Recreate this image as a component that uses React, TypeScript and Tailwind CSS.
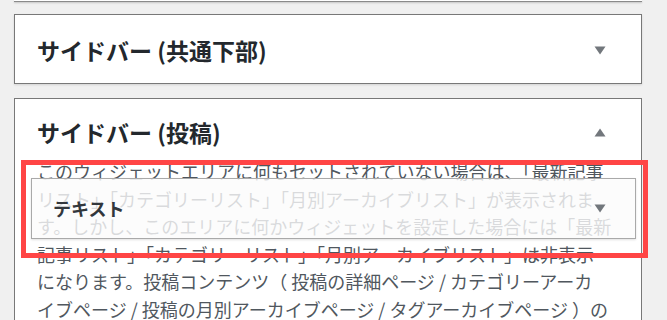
import React from 'react';

function Caret({ up = false }: { up?: boolean }) {
  return (
    <svg width="12" height="9" viewBox="0 0 12 9" className="shrink-0">
      <polygon points={up ? '0.5,8.5 11.5,8.5 6,0.5' : '0.5,0.5 11.5,0.5 6,8.5'} fill="#72777c" />
    </svg>
  );
}

const lines = [
  'このウィジェットエリアに何もセットされていない場合は、「最新記事',
  'リスト」「カテゴリーリスト」「月別アーカイブリスト」が表示されま',
  'す。しかし、このエリアに何かウィジェットを設定した場合には「最新',
  '記事リスト」「カテゴリーリスト」「月別アーカイブリスト」は非表示',
  'になります。投稿コンテンツ（ 投稿の詳細ページ / カテゴリーアーカ',
  'イブページ / 投稿の月別アーカイブページ / タグアーカイブページ ）の',
];

export default function App() {
  return (
    <div className="relative w-[667px] h-[320px] overflow-hidden bg-[#f0f0f0] font-['Noto_Sans_CJK_JP','Noto_Sans',sans-serif]">
      <div className="flex flex-col pl-[14px] w-[642px]">
        {/* previous section, scrolled mostly out of view */}
        <div className="h-[2px] bg-white border-b border-[#8a8a8a] shadow-[0_1px_2px_rgba(0,0,0,0.18)]" />

        <div className="mt-[12px] h-[70px] bg-white border border-[#787878] shadow-[0_1px_2px_rgba(0,0,0,0.12)] flex items-center justify-between pl-[22px] pr-[35px] pt-[2px]">
          <h3 className="text-[23px] leading-[28px] font-bold text-[#23282d] whitespace-nowrap">サイドバー (共通下部)</h3>
          <Caret />
        </div>

        <div className="mt-[14px] h-[240px] bg-white border-x border-t border-[#787878]">
          <div className="flex items-center justify-between pl-[22px] pr-[35px] pt-[19px]">
            <h3 className="text-[23px] leading-[28px] font-bold text-[#23282d] whitespace-nowrap">サイドバー (投稿)</h3>
            <Caret up />
          </div>
          <p className="mt-[12px] pl-[22px] text-[18px] leading-[27.6px] text-[#50575e] whitespace-nowrap">
            {lines.map((l, i) => (
              <span key={i} className="block">{l}</span>
            ))}
          </p>
        </div>
      </div>

      {/* widget being dragged */}
      <div className="absolute left-[31px] top-[178px] w-[605px] h-[61px] border border-[#a9a9a9] bg-[#fbfbfb]/80 shadow-[0_1px_2px_rgba(0,0,0,0.12)] flex items-center justify-between pl-[21px] pr-[29px]">
        <span className="text-[18px] font-bold text-[#32373c]">テキスト</span>
        <Caret />
      </div>

      {/* highlight frame */}
      <div className="absolute left-[21px] top-[160px] w-[627px] h-[98px] border-[5px] border-[#ff4545]" />
    </div>
  );
}
